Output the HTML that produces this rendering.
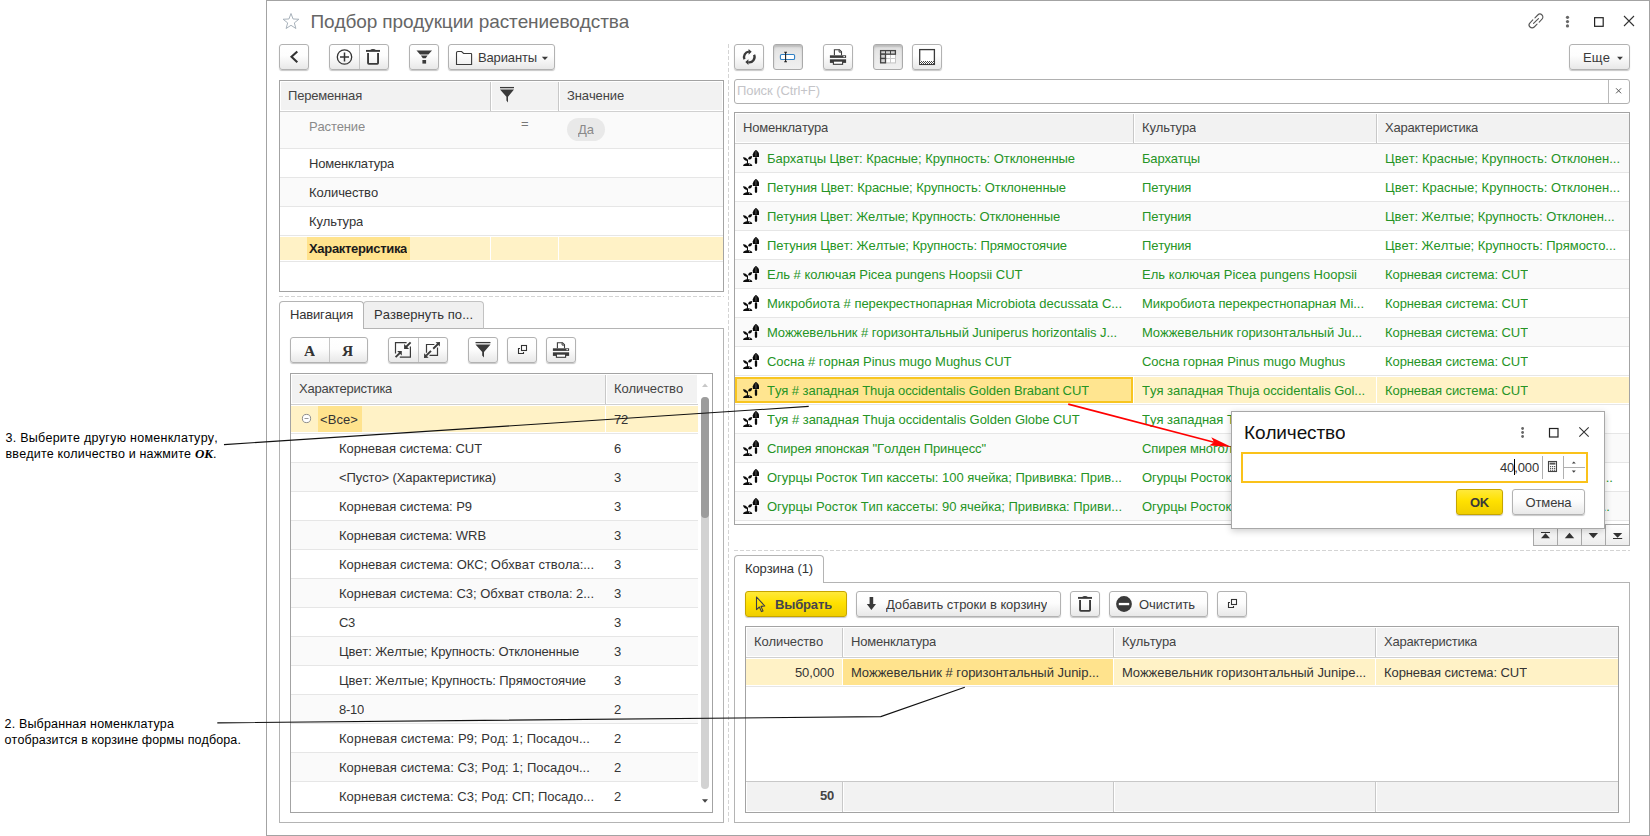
<!DOCTYPE html>
<html lang="ru"><head><meta charset="utf-8"><title>Подбор продукции растениеводства</title>
<style>
*{box-sizing:border-box;margin:0;padding:0}
html,body{width:1650px;height:836px;overflow:hidden;background:#fff}
body{position:relative;font-kerning:none;font-family:"Liberation Sans",sans-serif;font-size:13px;color:#333}
.abs,.btn,.t,.hl,.vl,.box,.hdr,.fill{position:absolute}
.t{white-space:nowrap;line-height:16px;height:16px;overflow:hidden}
.win{position:absolute;left:266px;top:0;width:1384px;height:836px;border:1px solid #a3a3a3;background:#fff}
.btn{border:1px solid #b2b2b2;border-radius:3px;background:linear-gradient(#ffffff 0%,#fdfdfd 45%,#e8e8e8 100%);box-shadow:0 1px 1px rgba(0,0,0,.22)}
.btn.on{background:linear-gradient(#dedede 0%,#e8e8e8 40%,#f0f0f0 100%);box-shadow:inset 0 2px 2px rgba(0,0,0,.16);border-color:#aaa}
.btn.y{background:linear-gradient(#ffe93a 0%,#ffe100 45%,#f0ce00 100%);border-color:#c6a500}
.box{border:1px solid #a3a3a3;background:#fff}
.hdr{background:#f2f2f2}
.hl{height:1px;background:#e6e6e6}
.vl{width:1px;background:#d9d9d9}
.g{color:#259425}
.note{position:absolute;font-size:12px;line-height:16px;color:#000;white-space:nowrap}

</style></head><body>
<div class="win"></div>
<svg class="abs" style="left:281px;top:11px" width="20" height="20" viewBox="0 0 20 20"><polygon points="10.00,2.50 12.06,7.97 17.89,8.24 13.33,11.88 14.88,17.51 10.00,14.30 5.12,17.51 6.67,11.88 2.11,8.24 7.94,7.97" fill="none" stroke="#a7b1ba" stroke-width="1"/></svg><div class="t" style="left:310.5px;top:9px;font-size:19px;letter-spacing:-.12px;line-height:26px;height:26px;color:#666">Подбор продукции растениеводства</div><svg class="abs" style="left:1525px;top:10px" width="22" height="22" viewBox="0 0 22 22"><g fill="none" stroke="#555" stroke-width="1.1" stroke-linecap="round" transform="rotate(-45 11 11)"><path d="M9.5 8 H5.5 a3 3 0 0 0 0 6 H9.5"/><path d="M12.5 8 H16.5 a3 3 0 0 1 0 6 H12.5"/><path d="M7.5 11 H14.5"/></g></svg><svg class="abs" style="left:1564px;top:14px" width="8" height="16" viewBox="0 0 8 16"><g fill="#666"><circle cx="3.5" cy="3.3" r="1.6"/><circle cx="3.5" cy="7.6" r="1.6"/><circle cx="3.5" cy="11.9" r="1.6"/></g></svg><svg class="abs" style="left:1592px;top:15px" width="14" height="14" viewBox="0 0 14 14"><rect x="2.6" y="2.7" width="8.6" height="8.6" fill="none" stroke="#222" stroke-width="1.2"/></svg><svg class="abs" style="left:1622px;top:14px" width="14" height="14" viewBox="0 0 14 14"><path d="M2 2 L12 12 M12 2 L2 12" fill="none" stroke="#333" stroke-width="1.1"/></svg>
<div class="btn " style="left:279px;top:44px;width:30px;height:26px;"><svg class="abs" style="left:0px;top:0px" width="28" height="24" viewBox="0 0 28 24"><path d="M17.3 6.4 L11.5 11.85 L17.3 17.3" fill="none" stroke="#333" stroke-width="2.1" stroke-linejoin="miter"/></svg></div><div class="btn " style="left:329px;top:44px;width:60px;height:26px;"><div class="vl" style="left:29px;top:0;height:24px;background:#c4c4c4"></div><svg class="abs" style="left:0px;top:0px" width="58" height="24" viewBox="0 0 58 24"><circle cx="14.5" cy="12" r="7.2" fill="none" stroke="#333" stroke-width="1.3"/><path d="M14.5 7.5 V16.5 M10 12 H19" stroke="#333" stroke-width="1.5" fill="none"/><g transform="translate(29,0)"><path d="M7 5.9 H21" stroke="#3a3a3a" stroke-width="1.9"/><path d="M10.8 5.2 Q14 3 17.2 5.2 Z" fill="#3a3a3a"/><path d="M9.05 8.1 V18.1 Q9.05 18.85 9.8 18.85 H18.3 Q19.05 18.85 19.05 18.1 V8.1" fill="none" stroke="#3a3a3a" stroke-width="1.9"/></g></svg></div><div class="btn " style="left:409px;top:44px;width:30px;height:26px;"><svg class="abs" style="left:0px;top:0px" width="28" height="24" viewBox="0 0 28 24"><path d="M6.5 5.5 h15.5 l-3.6 4 h-8.3 z" fill="#3a3a3a"/><path d="M10.9 10.6 h6.7 l-1.9 2.6 h-2.9 z" fill="#3a3a3a"/><rect x="12.4" y="15" width="3.7" height="3.6" fill="#3a3a3a"/></svg></div><div class="btn " style="left:448px;top:44px;width:107px;height:26px;"><svg class="abs" style="left:0px;top:0px" width="105" height="24" viewBox="0 0 105 24"><path d="M7.5 19.5 V7.8 Q7.5 6.5 8.8 6.5 H12.6 L14.6 8.5 H22 Q22.6 8.5 22.6 9.2 V19.5 Z" fill="none" stroke="#3a3a3a" stroke-width="1.1"/><path d="M92.8 11.8 h6.2 l-3.1 3.2 z" fill="#3a3a3a"/></svg><div class="t " style="left:29px;top:5px;color:#3a3a3a;letter-spacing:-0.138px">Варианты</div></div><div class="box" style="left:279px;top:80px;width:445px;height:212px"></div><div class="hdr" style="left:281px;top:82px;width:441px;height:28px"></div><div class="hl" style="left:280px;top:111px;width:443px;background:#d0d0d0"></div><div class="vl" style="left:490px;top:82px;height:29px;background:#c8c8c8"></div><div class="vl" style="left:491px;top:82px;height:29px;background:#fff"></div><div class="vl" style="left:558px;top:82px;height:29px;background:#c8c8c8"></div><div class="vl" style="left:559px;top:82px;height:29px;background:#fff"></div><div class="t " style="left:288px;top:88px;color:#444;;letter-spacing:-0.183px">Переменная</div><div class="t " style="left:567px;top:88px;color:#444;;letter-spacing:-0.117px">Значение</div><svg class="abs" style="left:498px;top:85px" width="18" height="20" viewBox="0 0 18 20"><path d="M2 2.6 H16" stroke="#3a3a3a" stroke-width="1.3"/><path d="M2 4.6 H16 L10 11.8 V17.4 L8.4 15.6 V11.8 Z" fill="#3a3a3a"/></svg><div class="fill" style="left:280px;top:112px;width:443px;height:36px;background:#fafafa"></div><div class="fill" style="left:280px;top:178px;width:443px;height:28px;background:#fafafa"></div><div class="hl" style="left:280px;top:148px;width:443px"></div><div class="hl" style="left:280px;top:177px;width:443px"></div><div class="hl" style="left:280px;top:206px;width:443px"></div><div class="hl" style="left:280px;top:235px;width:443px"></div><div class="hl" style="left:280px;top:261px;width:443px"></div><div class="fill" style="left:280px;top:237px;width:443px;height:23px;background:#fff2c6"></div><div class="fill" style="left:307px;top:237px;width:103px;height:23px;background:#ffe38d"></div><div class="vl" style="left:490px;top:237px;height:23px;background:#fff"></div><div class="vl" style="left:558px;top:237px;height:23px;background:#fff"></div><div class="t " style="left:309px;top:119px;color:#8a8a8a;letter-spacing:-0.157px">Растение</div><div class="t " style="left:521px;top:116px;color:#777;letter-spacing:0.408px">=</div><div class="fill" style="left:567px;top:118px;width:38px;height:23px;border-radius:11.5px;background:#e9e9e9"></div><div class="t " style="left:578px;top:122px;color:#8a8a8a;letter-spacing:-0.017px">Да</div><div class="t " style="left:309px;top:156px;color:#343434;letter-spacing:-0.199px">Номенклатура</div><div class="t " style="left:309px;top:185px;color:#343434;letter-spacing:-0.124px">Количество</div><div class="t " style="left:309px;top:214px;color:#343434;letter-spacing:-0.168px">Культура</div><div class="t " style="left:309px;top:241px;color:#1a1a1a;font-weight:bold;letter-spacing:-0.317px">Характеристика</div><div class="abs" style="left:279px;top:296px;width:445px;height:1px;background:repeating-linear-gradient(90deg,#d4d4d4 0 4px,transparent 4px 6px)"></div><div class="abs" style="left:728px;top:44px;width:1px;height:778px;background:repeating-linear-gradient(180deg,#d4d4d4 0 4px,transparent 4px 6px)"></div><div class="abs" style="left:279px;top:328px;width:445px;height:495px;border:1px solid #b4b4b4;background:#fff"></div><div class="abs" style="left:363px;top:301px;width:121px;height:28px;border:1px solid #c2c2c2;border-radius:4px 4px 0 0;background:#f0f0f0;border-bottom-color:#b4b4b4"></div><div class="abs" style="left:279px;top:301px;width:85px;height:28px;border:1px solid #b4b4b4;border-bottom:none;border-radius:4px 4px 0 0;background:#fff"></div><div class="t " style="left:290px;top:307px;color:#333;letter-spacing:-0.167px">Навигация</div><div class="t " style="left:374px;top:307px;color:#333;letter-spacing:0.049px">Развернуть по...</div><div class="btn " style="left:290px;top:337px;width:78px;height:26px;"><div class="vl" style="left:38px;top:0;height:24px;background:#c4c4c4"></div><div class="t" style="left:13px;top:4.5px;font-family:'Liberation Serif',serif;font-weight:bold;font-size:15.5px;color:#333">А</div><div class="t" style="left:51px;top:4.5px;font-family:'Liberation Serif',serif;font-weight:bold;font-size:15.5px;color:#333">Я</div></div><div class="btn " style="left:388px;top:337px;width:60px;height:26px;"><div class="vl" style="left:29px;top:0;height:24px;background:#c4c4c4"></div><svg class="abs" style="left:0px;top:0px" width="58" height="24" viewBox="0 0 58 24"><g fill="none" stroke="#3a3a3a" stroke-width="1.2"><path d="M17.6 4.6 H6.5 V15.5"/><path d="M21.4 8.5 V19.2 H10.8"/><path d="M21.6 4.4 L17 9" stroke-width="1.9"/><path d="M6.6 19.2 L11 14.8" stroke-width="1.9"/></g><path d="M15.1 5.9 V10.9 H20.1 Z M12.8 17.6 V12.9 H8.1 Z" fill="#3a3a3a"/><g fill="none" stroke="#3a3a3a" stroke-width="1.2"><path d="M45.4 6.5 H37.5 V14.7"/><path d="M48.5 9.6 V17.3 H40.5"/><path d="M49 6 L44.2 10.7 M42 12.8 L37.2 17.6" stroke-width="1.9"/></g><path d="M51 4 L46.6 4.2 L50.8 8.5 Z M35 19.9 L35.2 15.2 L39.6 19.7 Z" fill="#3a3a3a"/></svg></div><div class="btn " style="left:468px;top:337px;width:30px;height:26px;"><svg class="abs" style="left:0px;top:0px" width="28" height="24" viewBox="0 0 28 24"><path d="M6.5 4.6 H21.5" stroke="#3a3a3a" stroke-width="1.3"/><path d="M6.5 6.6 H21.5 L15 14 V19.6 L13.2 17.6 V14 Z" fill="#3a3a3a"/></svg></div><div class="btn " style="left:507px;top:337px;width:30px;height:26px;"><svg class="abs" style="left:0px;top:0px" width="28" height="24" viewBox="0 0 28 24"><g fill="none" stroke="#333" stroke-width="1.1"><rect x="13.5" y="7.5" width="5" height="5"/><path d="M12 10.5 H10.5 V15.5 H15.5 V14"/></g></svg></div><div class="btn " style="left:546px;top:337px;width:30px;height:26px;"><svg class="abs" style="left:0px;top:0px" width="28" height="24" viewBox="0 0 28 24"><g transform="translate(5.9,4)"><path d="M4.5 6.2 V0.7 H9.6 L11.6 2.7 V6.2" fill="#fff" stroke="#3a3a3a" stroke-width="1.1"/><path d="M9.2 0.7 V3.1 H11.6" fill="none" stroke="#3a3a3a" stroke-width="1"/><rect x="0" y="6.3" width="16.2" height="2.6" fill="#3a3a3a"/><rect x="13.6" y="7" width="1.3" height="1.2" fill="#fff"/><rect x="0" y="10.3" width="16.2" height="3.6" fill="#3a3a3a"/><rect x="3.5" y="12.1" width="9.2" height="3.2" fill="#fff" stroke="#3a3a3a" stroke-width="1.1"/></g></svg></div><div class="box" style="left:290px;top:373px;width:423px;height:440px"></div><div class="hdr" style="left:292px;top:375px;width:405px;height:28px"></div><div class="hl" style="left:291px;top:404px;width:407px;background:#d0d0d0"></div><div class="vl" style="left:605px;top:375px;height:29px;background:#c8c8c8"></div><div class="vl" style="left:606px;top:375px;height:29px;background:#fff"></div><div class="t " style="left:299px;top:381px;color:#444;;letter-spacing:-0.240px">Характеристика</div><div class="t " style="left:614px;top:381px;color:#444;;letter-spacing:-0.124px">Количество</div><div class="fill" style="left:291px;top:406px;width:407px;height:26px;background:#fff2c6"></div><div class="fill" style="left:318px;top:406px;width:44px;height:26px;background:#ffe38d"></div><div class="vl" style="left:605px;top:406px;height:26px;background:#fff"></div><svg class="abs" style="left:301px;top:413px" width="11" height="11" viewBox="0 0 11 11"><circle cx="5.5" cy="5.5" r="4.1" fill="#fff" stroke="#8c8c8c" stroke-width="1"/><path d="M3.5 5.5 H7.5" stroke="#9a9a9a" stroke-width="1"/></svg><div class="t " style="left:320px;top:412px;color:#343434;letter-spacing:0.083px">&lt;Все&gt;</div><div class="t " style="left:614px;top:412px;color:#343434;letter-spacing:-0.230px">72</div><div class="hl" style="left:291px;top:433px;width:407px"></div><div class="t " style="left:339px;top:441px;color:#343434;letter-spacing:-0.085px">Корневая система: CUT</div><div class="t " style="left:614px;top:441px;color:#343434;letter-spacing:-0.230px">6</div><div class="fill" style="left:291px;top:463px;width:407px;height:28px;background:#fafafa"></div><div class="hl" style="left:291px;top:462px;width:407px"></div><div class="t " style="left:339px;top:470px;color:#343434;letter-spacing:-0.097px">&lt;Пусто&gt; (Характеристика)</div><div class="t " style="left:614px;top:470px;color:#343434;letter-spacing:-0.230px">3</div><div class="hl" style="left:291px;top:491px;width:407px"></div><div class="t " style="left:339px;top:499px;color:#343434;letter-spacing:-0.048px">Корневая система: P9</div><div class="t " style="left:614px;top:499px;color:#343434;letter-spacing:-0.230px">3</div><div class="fill" style="left:291px;top:521px;width:407px;height:28px;background:#fafafa"></div><div class="hl" style="left:291px;top:520px;width:407px"></div><div class="t " style="left:339px;top:528px;color:#343434;letter-spacing:-0.067px">Корневая система: WRB</div><div class="t " style="left:614px;top:528px;color:#343434;letter-spacing:-0.230px">3</div><div class="hl" style="left:291px;top:549px;width:407px"></div><div class="t " style="left:339px;top:557px;color:#343434;letter-spacing:-0.024px">Корневая система: ОКС; Обхват ствола:...</div><div class="t " style="left:614px;top:557px;color:#343434;letter-spacing:-0.230px">3</div><div class="fill" style="left:291px;top:579px;width:407px;height:28px;background:#fafafa"></div><div class="hl" style="left:291px;top:578px;width:407px"></div><div class="t " style="left:339px;top:586px;color:#343434;letter-spacing:-0.033px">Корневая система: C3; Обхват ствола: 2...</div><div class="t " style="left:614px;top:586px;color:#343434;letter-spacing:-0.230px">3</div><div class="hl" style="left:291px;top:607px;width:407px"></div><div class="t " style="left:339px;top:615px;color:#343434;letter-spacing:-0.309px">C3</div><div class="t " style="left:614px;top:615px;color:#343434;letter-spacing:-0.230px">3</div><div class="fill" style="left:291px;top:637px;width:407px;height:28px;background:#fafafa"></div><div class="hl" style="left:291px;top:636px;width:407px"></div><div class="t " style="left:339px;top:644px;color:#343434;letter-spacing:-0.128px">Цвет: Желтые; Крупность: Отклоненные</div><div class="t " style="left:614px;top:644px;color:#343434;letter-spacing:-0.230px">3</div><div class="hl" style="left:291px;top:665px;width:407px"></div><div class="t " style="left:339px;top:673px;color:#343434;letter-spacing:-0.094px">Цвет: Желтые; Крупность: Прямостоячие</div><div class="t " style="left:614px;top:673px;color:#343434;letter-spacing:-0.230px">3</div><div class="fill" style="left:291px;top:695px;width:407px;height:28px;background:#fafafa"></div><div class="hl" style="left:291px;top:694px;width:407px"></div><div class="t " style="left:339px;top:702px;color:#343434;letter-spacing:-0.288px">8-10</div><div class="t " style="left:614px;top:702px;color:#343434;letter-spacing:-0.230px">2</div><div class="hl" style="left:291px;top:723px;width:407px"></div><div class="t " style="left:339px;top:731px;color:#343434;letter-spacing:0.045px">Корневая система: P9; Род: 1; Посадоч...</div><div class="t " style="left:614px;top:731px;color:#343434;letter-spacing:-0.230px">2</div><div class="fill" style="left:291px;top:753px;width:407px;height:28px;background:#fafafa"></div><div class="hl" style="left:291px;top:752px;width:407px"></div><div class="t " style="left:339px;top:760px;color:#343434;letter-spacing:0.027px">Корневая система: C3; Род: 1; Посадоч...</div><div class="t " style="left:614px;top:760px;color:#343434;letter-spacing:-0.230px">2</div><div class="hl" style="left:291px;top:781px;width:407px"></div><div class="t " style="left:339px;top:789px;color:#343434;letter-spacing:0.012px">Корневая система: C3; Род: СП; Посадо...</div><div class="t " style="left:614px;top:789px;color:#343434;letter-spacing:-0.230px">2</div><svg class="abs" style="left:699px;top:383px" width="12" height="8" viewBox="0 0 12 8"><path d="M3 4 L6 0.5 L9 4 Z" fill="#c8c8c8"/></svg><div class="fill" style="left:701px;top:397px;width:8px;height:392px;border-radius:4px;background:#d2d2d2"></div><div class="fill" style="left:701px;top:397px;width:8px;height:121px;border-radius:4px;background:#9c9c9c"></div><svg class="abs" style="left:699px;top:796px" width="12" height="8" viewBox="0 0 12 8"><path d="M3 3.2 L6 6.8 L9 3.2 Z" fill="#444"/></svg>
<div class="btn " style="left:734px;top:44px;width:30px;height:26px;"><svg class="abs" style="left:0px;top:0px" width="28" height="24" viewBox="0 0 28 24"><g transform="translate(.4,0)"><g fill="none" stroke="#3a3a3a" stroke-width="2.3"><path d="M9.1 14.24 A5.3 5.3 0 0 1 13.5 6.72"/><path d="M18.7 9.76 A5.3 5.3 0 0 1 12.9 17.2"/></g><path d="M13.2 3.9 L16.3 6.8 L13.2 9.7 Z M13 14.2 L9.9 17.1 L13 20 Z" fill="#3a3a3a"/></g></svg></div><div class="btn on" style="left:773px;top:44px;width:30px;height:26px;"><svg class="abs" style="left:0px;top:0px" width="28" height="24" viewBox="0 0 28 24"><rect x="6.4" y="9.5" width="14.2" height="5" rx="1.3" fill="#fff" stroke="#2f7fc4" stroke-width="1.1"/><path d="M11.6 7.2 V16.8 M10.2 7.3 H13 M10.2 16.7 H13" stroke="#222" stroke-width="1.1" fill="none"/></svg></div><div class="btn " style="left:823px;top:44px;width:30px;height:26px;"><svg class="abs" style="left:0px;top:0px" width="28" height="24" viewBox="0 0 28 24"><g transform="translate(5.9,4)"><path d="M4.5 6.2 V0.7 H9.6 L11.6 2.7 V6.2" fill="#fff" stroke="#3a3a3a" stroke-width="1.1"/><path d="M9.2 0.7 V3.1 H11.6" fill="none" stroke="#3a3a3a" stroke-width="1"/><rect x="0" y="6.3" width="16.2" height="2.6" fill="#3a3a3a"/><rect x="13.6" y="7" width="1.3" height="1.2" fill="#fff"/><rect x="0" y="10.3" width="16.2" height="3.6" fill="#3a3a3a"/><rect x="3.5" y="12.1" width="9.2" height="3.2" fill="#fff" stroke="#3a3a3a" stroke-width="1.1"/></g></svg></div><div class="btn on" style="left:873px;top:44px;width:30px;height:26px;"><svg class="abs" style="left:0px;top:0px" width="28" height="24" viewBox="0 0 28 24"><rect x="6.5" y="5.5" width="15" height="12.4" fill="#fff" stroke="#c4c4c4" stroke-width="1"/><path d="M16.5 9 V18 M11.5 13.5 H21.5" stroke="#c8c8c8" stroke-width="1" fill="none"/><rect x="6.6" y="5.6" width="14.8" height="3.6" fill="#d4d4d4" stroke="#444" stroke-width="1.3"/><path d="M11.5 5.5 V9 M16.5 5.5 V9" stroke="#444" stroke-width="1"/><rect x="6.6" y="9.2" width="4.9" height="4.3" fill="#d4d4d4" stroke="#444" stroke-width="1.3"/><rect x="6.6" y="13.5" width="4.9" height="4.3" fill="#d4d4d4" stroke="#444" stroke-width="1.3"/></svg></div><div class="btn " style="left:912px;top:44px;width:30px;height:26px;"><svg class="abs" style="left:0px;top:0px" width="28" height="24" viewBox="0 0 28 24"><defs><pattern id="chk" width="2" height="2" patternUnits="userSpaceOnUse"><rect width="2" height="2" fill="#fff"/><rect width="1" height="1" fill="#444"/><rect x="1" y="1" width="1" height="1" fill="#444"/></pattern></defs><rect x="6.7" y="4.6" width="14.7" height="14.8" fill="#fff" stroke="#3a3a3a" stroke-width="1.3"/><rect x="7" y="16" width="14" height="3" fill="url(#chk)"/></svg></div><div class="btn " style="left:1569px;top:44px;width:61px;height:26px;"><div class="t " style="left:13px;top:5px;color:#3a3a3a;letter-spacing:0.134px">Еще</div><svg class="abs" style="left:0px;top:0px" width="59" height="24" viewBox="0 0 59 24"><path d="M47.1 11.8 h5.8 l-2.9 3.2 z" fill="#3a3a3a"/></svg></div><div class="abs" style="left:734px;top:79px;width:896px;height:25px;border:1px solid #b0b0b0;border-radius:3px;background:#fff"></div><div class="vl" style="left:1608px;top:80px;height:23px;background:#b9b9b9"></div><div class="t " style="left:737px;top:83px;color:#c4c4c8;letter-spacing:-0.075px">Поиск (Ctrl+F)</div><svg class="abs" style="left:1613px;top:86px" width="12" height="12" viewBox="0 0 12 12"><path d="M3.1 2.3 L8.1 7.3 M8.1 2.3 L3.1 7.3" stroke="#555" stroke-width="1" fill="none"/></svg><div class="box" style="left:734px;top:112px;width:896px;height:413px"></div><div class="hdr" style="left:736px;top:114px;width:893px;height:28px"></div><div class="hl" style="left:735px;top:143px;width:894px;background:#d0d0d0"></div><div class="vl" style="left:1133px;top:114px;height:29px;background:#c8c8c8"></div><div class="vl" style="left:1134px;top:114px;height:29px;background:#fff"></div><div class="vl" style="left:1376px;top:114px;height:29px;background:#c8c8c8"></div><div class="vl" style="left:1377px;top:114px;height:29px;background:#fff"></div><div class="t " style="left:743px;top:120px;color:#444;;letter-spacing:-0.199px">Номенклатура</div><div class="t " style="left:1142px;top:120px;color:#444;;letter-spacing:-0.168px">Культура</div><div class="t " style="left:1385px;top:120px;color:#444;;letter-spacing:-0.240px">Характеристика</div><div class="fill" style="left:735px;top:144px;width:894px;height:28px;background:#fafafa"></div><div class="hl" style="left:735px;top:172px;width:894px"></div><svg class="abs" style="left:743px;top:150px" width="16" height="16" viewBox="0 0 16 16"><g fill="#0a0a0a"><path d="M12.95 -0.2 Q16.2 2.2 16.2 4.3 V6.9 H9.8 V4.3 Q9.8 2.2 12.95 -0.2 Z"/><rect x="11.85" y="7.3" width="2.3" height="6.6" rx="1.1"/><path d="M0 7.3 Q2.7 6.9 3.9 8.8 Q4.4 10.3 3.7 10.7 Q0.9 10.9 0 7.3 Z"/><path d="M9 5.9 Q9.2 9.1 6.3 9.6 Q4.9 9.5 5.2 8 Q6.2 6 9 5.9 Z"/><path d="M3.2 10.2 L5 9 V13.6 H3.9 V10.9 Z"/><path d="M0 16.1 Q0.2 14.3 2 13.8 L4.5 12.9 L7.5 13.8 Q9.2 14.4 9.4 16.1 Z"/></g><path d="M12.95 1.2 V6.4" stroke="#8a8a8a" stroke-width="0.6" fill="none"/><rect x="6" y="14.4" width="1.2" height=".7" fill="#ddd"/></svg><div class="t g" style="left:767px;top:151px;;letter-spacing:-0.057px">Бархатцы Цвет: Красные; Крупность: Отклоненные</div><div class="t g" style="left:1142px;top:151px;;letter-spacing:-0.183px">Бархатцы</div><div class="t g" style="left:1385px;top:151px;;letter-spacing:0.010px">Цвет: Красные; Крупность: Отклонен...</div><div class="hl" style="left:735px;top:201px;width:894px"></div><svg class="abs" style="left:743px;top:179px" width="16" height="16" viewBox="0 0 16 16"><g fill="#0a0a0a"><path d="M12.95 -0.2 Q16.2 2.2 16.2 4.3 V6.9 H9.8 V4.3 Q9.8 2.2 12.95 -0.2 Z"/><rect x="11.85" y="7.3" width="2.3" height="6.6" rx="1.1"/><path d="M0 7.3 Q2.7 6.9 3.9 8.8 Q4.4 10.3 3.7 10.7 Q0.9 10.9 0 7.3 Z"/><path d="M9 5.9 Q9.2 9.1 6.3 9.6 Q4.9 9.5 5.2 8 Q6.2 6 9 5.9 Z"/><path d="M3.2 10.2 L5 9 V13.6 H3.9 V10.9 Z"/><path d="M0 16.1 Q0.2 14.3 2 13.8 L4.5 12.9 L7.5 13.8 Q9.2 14.4 9.4 16.1 Z"/></g><path d="M12.95 1.2 V6.4" stroke="#8a8a8a" stroke-width="0.6" fill="none"/><rect x="6" y="14.4" width="1.2" height=".7" fill="#ddd"/></svg><div class="t g" style="left:767px;top:180px;;letter-spacing:-0.059px">Петуния Цвет: Красные; Крупность: Отклоненные</div><div class="t g" style="left:1142px;top:180px;;letter-spacing:-0.216px">Петуния</div><div class="t g" style="left:1385px;top:180px;;letter-spacing:0.010px">Цвет: Красные; Крупность: Отклонен...</div><div class="fill" style="left:735px;top:202px;width:894px;height:28px;background:#fafafa"></div><div class="hl" style="left:735px;top:230px;width:894px"></div><svg class="abs" style="left:743px;top:208px" width="16" height="16" viewBox="0 0 16 16"><g fill="#0a0a0a"><path d="M12.95 -0.2 Q16.2 2.2 16.2 4.3 V6.9 H9.8 V4.3 Q9.8 2.2 12.95 -0.2 Z"/><rect x="11.85" y="7.3" width="2.3" height="6.6" rx="1.1"/><path d="M0 7.3 Q2.7 6.9 3.9 8.8 Q4.4 10.3 3.7 10.7 Q0.9 10.9 0 7.3 Z"/><path d="M9 5.9 Q9.2 9.1 6.3 9.6 Q4.9 9.5 5.2 8 Q6.2 6 9 5.9 Z"/><path d="M3.2 10.2 L5 9 V13.6 H3.9 V10.9 Z"/><path d="M0 16.1 Q0.2 14.3 2 13.8 L4.5 12.9 L7.5 13.8 Q9.2 14.4 9.4 16.1 Z"/></g><path d="M12.95 1.2 V6.4" stroke="#8a8a8a" stroke-width="0.6" fill="none"/><rect x="6" y="14.4" width="1.2" height=".7" fill="#ddd"/></svg><div class="t g" style="left:767px;top:209px;;letter-spacing:-0.130px">Петуния Цвет: Желтые; Крупность: Отклоненные</div><div class="t g" style="left:1142px;top:209px;;letter-spacing:-0.216px">Петуния</div><div class="t g" style="left:1385px;top:209px;;letter-spacing:-0.061px">Цвет: Желтые; Крупность: Отклонен...</div><div class="hl" style="left:735px;top:259px;width:894px"></div><svg class="abs" style="left:743px;top:237px" width="16" height="16" viewBox="0 0 16 16"><g fill="#0a0a0a"><path d="M12.95 -0.2 Q16.2 2.2 16.2 4.3 V6.9 H9.8 V4.3 Q9.8 2.2 12.95 -0.2 Z"/><rect x="11.85" y="7.3" width="2.3" height="6.6" rx="1.1"/><path d="M0 7.3 Q2.7 6.9 3.9 8.8 Q4.4 10.3 3.7 10.7 Q0.9 10.9 0 7.3 Z"/><path d="M9 5.9 Q9.2 9.1 6.3 9.6 Q4.9 9.5 5.2 8 Q6.2 6 9 5.9 Z"/><path d="M3.2 10.2 L5 9 V13.6 H3.9 V10.9 Z"/><path d="M0 16.1 Q0.2 14.3 2 13.8 L4.5 12.9 L7.5 13.8 Q9.2 14.4 9.4 16.1 Z"/></g><path d="M12.95 1.2 V6.4" stroke="#8a8a8a" stroke-width="0.6" fill="none"/><rect x="6" y="14.4" width="1.2" height=".7" fill="#ddd"/></svg><div class="t g" style="left:767px;top:238px;;letter-spacing:-0.102px">Петуния Цвет: Желтые; Крупность: Прямостоячие</div><div class="t g" style="left:1142px;top:238px;;letter-spacing:-0.216px">Петуния</div><div class="t g" style="left:1385px;top:238px;;letter-spacing:-0.056px">Цвет: Желтые; Крупность: Прямосто...</div><div class="fill" style="left:735px;top:260px;width:894px;height:28px;background:#fafafa"></div><div class="hl" style="left:735px;top:288px;width:894px"></div><svg class="abs" style="left:743px;top:266px" width="16" height="16" viewBox="0 0 16 16"><g fill="#0a0a0a"><path d="M12.95 -0.2 Q16.2 2.2 16.2 4.3 V6.9 H9.8 V4.3 Q9.8 2.2 12.95 -0.2 Z"/><rect x="11.85" y="7.3" width="2.3" height="6.6" rx="1.1"/><path d="M0 7.3 Q2.7 6.9 3.9 8.8 Q4.4 10.3 3.7 10.7 Q0.9 10.9 0 7.3 Z"/><path d="M9 5.9 Q9.2 9.1 6.3 9.6 Q4.9 9.5 5.2 8 Q6.2 6 9 5.9 Z"/><path d="M3.2 10.2 L5 9 V13.6 H3.9 V10.9 Z"/><path d="M0 16.1 Q0.2 14.3 2 13.8 L4.5 12.9 L7.5 13.8 Q9.2 14.4 9.4 16.1 Z"/></g><path d="M12.95 1.2 V6.4" stroke="#8a8a8a" stroke-width="0.6" fill="none"/><rect x="6" y="14.4" width="1.2" height=".7" fill="#ddd"/></svg><div class="t g" style="left:767px;top:267px;;letter-spacing:-0.005px">Ель # колючая Picea pungens Hoopsii CUT</div><div class="t g" style="left:1142px;top:267px;;letter-spacing:0.014px">Ель колючая Picea pungens Hoopsii</div><div class="t g" style="left:1385px;top:267px;;letter-spacing:-0.085px">Корневая система: CUT</div><div class="hl" style="left:735px;top:317px;width:894px"></div><svg class="abs" style="left:743px;top:295px" width="16" height="16" viewBox="0 0 16 16"><g fill="#0a0a0a"><path d="M12.95 -0.2 Q16.2 2.2 16.2 4.3 V6.9 H9.8 V4.3 Q9.8 2.2 12.95 -0.2 Z"/><rect x="11.85" y="7.3" width="2.3" height="6.6" rx="1.1"/><path d="M0 7.3 Q2.7 6.9 3.9 8.8 Q4.4 10.3 3.7 10.7 Q0.9 10.9 0 7.3 Z"/><path d="M9 5.9 Q9.2 9.1 6.3 9.6 Q4.9 9.5 5.2 8 Q6.2 6 9 5.9 Z"/><path d="M3.2 10.2 L5 9 V13.6 H3.9 V10.9 Z"/><path d="M0 16.1 Q0.2 14.3 2 13.8 L4.5 12.9 L7.5 13.8 Q9.2 14.4 9.4 16.1 Z"/></g><path d="M12.95 1.2 V6.4" stroke="#8a8a8a" stroke-width="0.6" fill="none"/><rect x="6" y="14.4" width="1.2" height=".7" fill="#ddd"/></svg><div class="t g" style="left:767px;top:296px;;letter-spacing:-0.032px">Микробиота # перекрестнопарная Microbiota decussata C...</div><div class="t g" style="left:1142px;top:296px;;letter-spacing:-0.054px">Микробиота перекрестнопарная Mi...</div><div class="t g" style="left:1385px;top:296px;;letter-spacing:-0.085px">Корневая система: CUT</div><div class="fill" style="left:735px;top:318px;width:894px;height:28px;background:#fafafa"></div><div class="hl" style="left:735px;top:346px;width:894px"></div><svg class="abs" style="left:743px;top:324px" width="16" height="16" viewBox="0 0 16 16"><g fill="#0a0a0a"><path d="M12.95 -0.2 Q16.2 2.2 16.2 4.3 V6.9 H9.8 V4.3 Q9.8 2.2 12.95 -0.2 Z"/><rect x="11.85" y="7.3" width="2.3" height="6.6" rx="1.1"/><path d="M0 7.3 Q2.7 6.9 3.9 8.8 Q4.4 10.3 3.7 10.7 Q0.9 10.9 0 7.3 Z"/><path d="M9 5.9 Q9.2 9.1 6.3 9.6 Q4.9 9.5 5.2 8 Q6.2 6 9 5.9 Z"/><path d="M3.2 10.2 L5 9 V13.6 H3.9 V10.9 Z"/><path d="M0 16.1 Q0.2 14.3 2 13.8 L4.5 12.9 L7.5 13.8 Q9.2 14.4 9.4 16.1 Z"/></g><path d="M12.95 1.2 V6.4" stroke="#8a8a8a" stroke-width="0.6" fill="none"/><rect x="6" y="14.4" width="1.2" height=".7" fill="#ddd"/></svg><div class="t g" style="left:767px;top:325px;;letter-spacing:-0.072px">Можжевельник # горизонтальный Juniperus horizontalis J...</div><div class="t g" style="left:1142px;top:325px;;letter-spacing:-0.034px">Можжевельник горизонтальный Ju...</div><div class="t g" style="left:1385px;top:325px;;letter-spacing:-0.085px">Корневая система: CUT</div><div class="hl" style="left:735px;top:375px;width:894px"></div><svg class="abs" style="left:743px;top:353px" width="16" height="16" viewBox="0 0 16 16"><g fill="#0a0a0a"><path d="M12.95 -0.2 Q16.2 2.2 16.2 4.3 V6.9 H9.8 V4.3 Q9.8 2.2 12.95 -0.2 Z"/><rect x="11.85" y="7.3" width="2.3" height="6.6" rx="1.1"/><path d="M0 7.3 Q2.7 6.9 3.9 8.8 Q4.4 10.3 3.7 10.7 Q0.9 10.9 0 7.3 Z"/><path d="M9 5.9 Q9.2 9.1 6.3 9.6 Q4.9 9.5 5.2 8 Q6.2 6 9 5.9 Z"/><path d="M3.2 10.2 L5 9 V13.6 H3.9 V10.9 Z"/><path d="M0 16.1 Q0.2 14.3 2 13.8 L4.5 12.9 L7.5 13.8 Q9.2 14.4 9.4 16.1 Z"/></g><path d="M12.95 1.2 V6.4" stroke="#8a8a8a" stroke-width="0.6" fill="none"/><rect x="6" y="14.4" width="1.2" height=".7" fill="#ddd"/></svg><div class="t g" style="left:767px;top:354px;;letter-spacing:-0.016px">Сосна # горная Pinus mugo Mughus CUT</div><div class="t g" style="left:1142px;top:354px;;letter-spacing:-0.020px">Сосна горная Pinus mugo Mughus</div><div class="t g" style="left:1385px;top:354px;;letter-spacing:-0.085px">Корневая система: CUT</div><div class="fill" style="left:735px;top:377px;width:894px;height:26px;background:#fff2c6"></div><div class="fill" style="left:735px;top:377px;width:398px;height:26px;background:#ffe590;border:2px solid #f8c520"></div><div class="vl" style="left:1133px;top:377px;height:26px;background:#fff"></div><div class="vl" style="left:1376px;top:377px;height:26px;background:#fff"></div><div class="hl" style="left:735px;top:404px;width:894px"></div><svg class="abs" style="left:743px;top:382px" width="16" height="16" viewBox="0 0 16 16"><g fill="#0a0a0a"><path d="M12.95 -0.2 Q16.2 2.2 16.2 4.3 V6.9 H9.8 V4.3 Q9.8 2.2 12.95 -0.2 Z"/><rect x="11.85" y="7.3" width="2.3" height="6.6" rx="1.1"/><path d="M0 7.3 Q2.7 6.9 3.9 8.8 Q4.4 10.3 3.7 10.7 Q0.9 10.9 0 7.3 Z"/><path d="M9 5.9 Q9.2 9.1 6.3 9.6 Q4.9 9.5 5.2 8 Q6.2 6 9 5.9 Z"/><path d="M3.2 10.2 L5 9 V13.6 H3.9 V10.9 Z"/><path d="M0 16.1 Q0.2 14.3 2 13.8 L4.5 12.9 L7.5 13.8 Q9.2 14.4 9.4 16.1 Z"/></g><path d="M12.95 1.2 V6.4" stroke="#8a8a8a" stroke-width="0.6" fill="none"/><rect x="6" y="14.4" width="1.2" height=".7" fill="#ddd"/></svg><div class="t g" style="left:767px;top:383px;;letter-spacing:-0.057px">Туя # западная Thuja occidentalis Golden Brabant CUT</div><div class="t g" style="left:1142px;top:383px;;letter-spacing:-0.021px">Туя западная Thuja occidentalis Gol...</div><div class="t g" style="left:1385px;top:383px;;letter-spacing:-0.085px">Корневая система: CUT</div><div class="hl" style="left:735px;top:433px;width:894px"></div><svg class="abs" style="left:743px;top:411px" width="16" height="16" viewBox="0 0 16 16"><g fill="#0a0a0a"><path d="M12.95 -0.2 Q16.2 2.2 16.2 4.3 V6.9 H9.8 V4.3 Q9.8 2.2 12.95 -0.2 Z"/><rect x="11.85" y="7.3" width="2.3" height="6.6" rx="1.1"/><path d="M0 7.3 Q2.7 6.9 3.9 8.8 Q4.4 10.3 3.7 10.7 Q0.9 10.9 0 7.3 Z"/><path d="M9 5.9 Q9.2 9.1 6.3 9.6 Q4.9 9.5 5.2 8 Q6.2 6 9 5.9 Z"/><path d="M3.2 10.2 L5 9 V13.6 H3.9 V10.9 Z"/><path d="M0 16.1 Q0.2 14.3 2 13.8 L4.5 12.9 L7.5 13.8 Q9.2 14.4 9.4 16.1 Z"/></g><path d="M12.95 1.2 V6.4" stroke="#8a8a8a" stroke-width="0.6" fill="none"/><rect x="6" y="14.4" width="1.2" height=".7" fill="#ddd"/></svg><div class="t g" style="left:767px;top:412px;;letter-spacing:-0.033px">Туя # западная Thuja occidentalis Golden Globe CUT</div><div class="t g" style="left:1142px;top:412px;;letter-spacing:-0.021px">Туя западная Thuja occidentalis Gol...</div><div class="t g" style="left:1385px;top:412px;;letter-spacing:-0.085px">Корневая система: CUT</div><div class="fill" style="left:735px;top:434px;width:894px;height:28px;background:#fafafa"></div><div class="hl" style="left:735px;top:462px;width:894px"></div><svg class="abs" style="left:743px;top:440px" width="16" height="16" viewBox="0 0 16 16"><g fill="#0a0a0a"><path d="M12.95 -0.2 Q16.2 2.2 16.2 4.3 V6.9 H9.8 V4.3 Q9.8 2.2 12.95 -0.2 Z"/><rect x="11.85" y="7.3" width="2.3" height="6.6" rx="1.1"/><path d="M0 7.3 Q2.7 6.9 3.9 8.8 Q4.4 10.3 3.7 10.7 Q0.9 10.9 0 7.3 Z"/><path d="M9 5.9 Q9.2 9.1 6.3 9.6 Q4.9 9.5 5.2 8 Q6.2 6 9 5.9 Z"/><path d="M3.2 10.2 L5 9 V13.6 H3.9 V10.9 Z"/><path d="M0 16.1 Q0.2 14.3 2 13.8 L4.5 12.9 L7.5 13.8 Q9.2 14.4 9.4 16.1 Z"/></g><path d="M12.95 1.2 V6.4" stroke="#8a8a8a" stroke-width="0.6" fill="none"/><rect x="6" y="14.4" width="1.2" height=".7" fill="#ddd"/></svg><div class="t g" style="left:767px;top:441px;;letter-spacing:-0.113px">Спирея японская "Голден Принцесс"</div><div class="t g" style="left:1142px;top:441px;;letter-spacing:-0.119px">Спирея многолетняя</div><div class="t g" style="left:1385px;top:441px;;letter-spacing:-0.084px">Корневая система: C2</div><div class="hl" style="left:735px;top:491px;width:894px"></div><svg class="abs" style="left:743px;top:469px" width="16" height="16" viewBox="0 0 16 16"><g fill="#0a0a0a"><path d="M12.95 -0.2 Q16.2 2.2 16.2 4.3 V6.9 H9.8 V4.3 Q9.8 2.2 12.95 -0.2 Z"/><rect x="11.85" y="7.3" width="2.3" height="6.6" rx="1.1"/><path d="M0 7.3 Q2.7 6.9 3.9 8.8 Q4.4 10.3 3.7 10.7 Q0.9 10.9 0 7.3 Z"/><path d="M9 5.9 Q9.2 9.1 6.3 9.6 Q4.9 9.5 5.2 8 Q6.2 6 9 5.9 Z"/><path d="M3.2 10.2 L5 9 V13.6 H3.9 V10.9 Z"/><path d="M0 16.1 Q0.2 14.3 2 13.8 L4.5 12.9 L7.5 13.8 Q9.2 14.4 9.4 16.1 Z"/></g><path d="M12.95 1.2 V6.4" stroke="#8a8a8a" stroke-width="0.6" fill="none"/><rect x="6" y="14.4" width="1.2" height=".7" fill="#ddd"/></svg><div class="t g" style="left:767px;top:470px;;letter-spacing:-0.016px">Огурцы Росток Тип кассеты: 100 ячейка; Прививка: Прив...</div><div class="t g" style="left:1142px;top:470px;;letter-spacing:-0.097px">Огурцы Росток</div><div class="t g" style="left:1385px;top:470px;;letter-spacing:0.009px">Тип кассеты: 100 ячейка; Прививка:...</div><div class="fill" style="left:735px;top:492px;width:894px;height:28px;background:#fafafa"></div><div class="hl" style="left:735px;top:520px;width:894px"></div><svg class="abs" style="left:743px;top:498px" width="16" height="16" viewBox="0 0 16 16"><g fill="#0a0a0a"><path d="M12.95 -0.2 Q16.2 2.2 16.2 4.3 V6.9 H9.8 V4.3 Q9.8 2.2 12.95 -0.2 Z"/><rect x="11.85" y="7.3" width="2.3" height="6.6" rx="1.1"/><path d="M0 7.3 Q2.7 6.9 3.9 8.8 Q4.4 10.3 3.7 10.7 Q0.9 10.9 0 7.3 Z"/><path d="M9 5.9 Q9.2 9.1 6.3 9.6 Q4.9 9.5 5.2 8 Q6.2 6 9 5.9 Z"/><path d="M3.2 10.2 L5 9 V13.6 H3.9 V10.9 Z"/><path d="M0 16.1 Q0.2 14.3 2 13.8 L4.5 12.9 L7.5 13.8 Q9.2 14.4 9.4 16.1 Z"/></g><path d="M12.95 1.2 V6.4" stroke="#8a8a8a" stroke-width="0.6" fill="none"/><rect x="6" y="14.4" width="1.2" height=".7" fill="#ddd"/></svg><div class="t g" style="left:767px;top:499px;;letter-spacing:-0.014px">Огурцы Росток Тип кассеты: 90 ячейка; Прививка: Приви...</div><div class="t g" style="left:1142px;top:499px;;letter-spacing:-0.097px">Огурцы Росток</div><div class="t g" style="left:1385px;top:499px;;letter-spacing:0.029px">Тип кассеты: 90 ячейка; Прививка: ...</div><div class="abs" style="left:1533px;top:524px;width:97px;height:22px;border:1px solid #a8a8a8;background:linear-gradient(#fff,#ececec)"></div><div class="vl" style="left:1557px;top:525px;height:20px;background:#a8a8a8"></div><div class="vl" style="left:1581px;top:525px;height:20px;background:#a8a8a8"></div><div class="vl" style="left:1605px;top:525px;height:20px;background:#a8a8a8"></div><svg class="abs" style="left:1533px;top:524px" width="97" height="22" viewBox="0 0 97 22"><g fill="#333"><path d="M8 7.9 h9 v1.1 h-9 z M8 14.2 l4.5 -5 l4.5 5 z"/><path d="M31.8 14.2 l4.7 -5.4 l4.7 5.4 z"/><path d="M55.6 9 l4.7 5.3 l4.7 -5.3 z"/><path d="M80 9 l4.6 4.8 l4.6 -4.8 z M80 13.9 h9.2 v1.1 h-9.2 z"/></g></svg><div class="abs" style="left:734px;top:550px;width:896px;height:1px;background:repeating-linear-gradient(90deg,#d4d4d4 0 4px,transparent 4px 6px)"></div>
<div class="abs" style="left:734px;top:582px;width:896px;height:241px;border:1px solid #b4b4b4;background:#fff"></div><div class="abs" style="left:734px;top:555px;width:90px;height:28px;border:1px solid #b4b4b4;border-bottom:none;border-radius:4px 4px 0 0;background:#fff"></div><div class="t " style="left:745px;top:561px;color:#333;letter-spacing:-0.106px">Корзина (1)</div><div class="btn y" style="left:745px;top:591px;width:102px;height:26px;"><svg class="abs" style="left:0px;top:0px" width="30" height="24" viewBox="0 0 30 24"><path d="M10.5 5 V17.6 L13.4 15 L15.4 19.6 L17 18.9 L15 14.4 L18.8 14 Z" fill="none" stroke="#3a3a4a" stroke-width="1.1" stroke-linejoin="round"/></svg><div class="t " style="left:29px;top:5px;color:#44444e;font-weight:bold;letter-spacing:-0.150px">Выбрать</div></div><div class="btn " style="left:856px;top:591px;width:205px;height:26px;"><svg class="abs" style="left:0px;top:0px" width="30" height="24" viewBox="0 0 30 24"><path d="M12.6 5.1 h3.6 v6.9 h2.8 l-4.6 6 l-4.6 -6 h2.8 z" fill="#3a3a3a"/></svg><div class="t " style="left:29px;top:5px;color:#3a3a3a;letter-spacing:-0.045px">Добавить строки в корзину</div></div><div class="btn " style="left:1070px;top:591px;width:30px;height:26px;"><svg class="abs" style="left:0px;top:0px" width="28" height="24" viewBox="0 0 28 24"><g transform="translate(0,0)"><path d="M7 5.9 H21" stroke="#3a3a3a" stroke-width="1.9"/><path d="M10.8 5.2 Q14 3 17.2 5.2 Z" fill="#3a3a3a"/><path d="M9.05 8.1 V18.1 Q9.05 18.85 9.8 18.85 H18.3 Q19.05 18.85 19.05 18.1 V8.1" fill="none" stroke="#3a3a3a" stroke-width="1.9"/></g></svg></div><div class="btn " style="left:1109px;top:591px;width:99px;height:26px;"><svg class="abs" style="left:0px;top:0px" width="30" height="24" viewBox="0 0 30 24"><circle cx="14" cy="12" r="7.9" fill="#3a3a3a"/><rect x="8.8" y="10.9" width="10.4" height="2.3" fill="#fff"/></svg><div class="t " style="left:29px;top:5px;color:#3a3a3a;letter-spacing:-0.074px">Очистить</div></div><div class="btn " style="left:1217px;top:591px;width:30px;height:26px;"><svg class="abs" style="left:0px;top:0px" width="28" height="24" viewBox="0 0 28 24"><g fill="none" stroke="#333" stroke-width="1.1"><rect x="13.5" y="7.5" width="5" height="5"/><path d="M12 10.5 H10.5 V15.5 H15.5 V14"/></g></svg></div><div class="box" style="left:745px;top:626px;width:874px;height:187px"></div><div class="hdr" style="left:747px;top:628px;width:871px;height:28px"></div><div class="hl" style="left:746px;top:657px;width:872px;background:#d0d0d0"></div><div class="vl" style="left:842px;top:628px;height:29px;background:#c8c8c8"></div><div class="vl" style="left:843px;top:628px;height:29px;background:#fff"></div><div class="vl" style="left:1113px;top:628px;height:29px;background:#c8c8c8"></div><div class="vl" style="left:1114px;top:628px;height:29px;background:#fff"></div><div class="vl" style="left:1375px;top:628px;height:29px;background:#c8c8c8"></div><div class="vl" style="left:1376px;top:628px;height:29px;background:#fff"></div><div class="t " style="left:754px;top:634px;color:#444;;letter-spacing:-0.124px">Количество</div><div class="t " style="left:851px;top:634px;color:#444;;letter-spacing:-0.199px">Номенклатура</div><div class="t " style="left:1122px;top:634px;color:#444;;letter-spacing:-0.168px">Культура</div><div class="t " style="left:1384px;top:634px;color:#444;;letter-spacing:-0.240px">Характеристика</div><div class="fill" style="left:746px;top:659px;width:872px;height:26px;background:#fff2c6"></div><div class="fill" style="left:843px;top:659px;width:270px;height:26px;background:#ffe38d"></div><div class="vl" style="left:842px;top:659px;height:26px;background:#fff"></div><div class="vl" style="left:1113px;top:659px;height:26px;background:#fff"></div><div class="vl" style="left:1375px;top:659px;height:26px;background:#fff"></div><div class="hl" style="left:746px;top:686px;width:872px"></div><div class="t " style="left:754px;top:665px;color:#343434;width:80px;text-align:right;letter-spacing:-0.127px">50,000</div><div class="t " style="left:851px;top:665px;color:#343434;letter-spacing:-0.035px">Можжевельник # горизонтальный Junip...</div><div class="t " style="left:1122px;top:665px;color:#343434;letter-spacing:-0.046px">Можжевельник горизонтальный Junipe...</div><div class="t " style="left:1384px;top:665px;color:#343434;letter-spacing:-0.085px">Корневая система: CUT</div><div class="hdr" style="left:747px;top:782px;width:871px;height:29px"></div><div class="hl" style="left:746px;top:781px;width:872px;background:#c8c8c8"></div><div class="vl" style="left:842px;top:782px;height:30px;background:#c8c8c8"></div><div class="vl" style="left:843px;top:782px;height:30px;background:#fff"></div><div class="vl" style="left:1113px;top:782px;height:30px;background:#c8c8c8"></div><div class="vl" style="left:1114px;top:782px;height:30px;background:#fff"></div><div class="vl" style="left:1375px;top:782px;height:30px;background:#c8c8c8"></div><div class="vl" style="left:1376px;top:782px;height:30px;background:#fff"></div><div class="t " style="left:754px;top:788px;color:#444;font-weight:bold;width:80px;text-align:right;letter-spacing:-0.230px">50</div>
<svg class="abs" style="left:0;top:0" width="1650" height="836"><path d="M1068.2 404.1 L1214.1 442.3" stroke="#ff0000" stroke-width="1.7" fill="none"/><polygon points="1231.5,446.9 1211.3,437.2 1214.1,442.3 1209.1,445.5" fill="#ff0000"/></svg>
<div class="abs" style="left:1231px;top:411px;width:374px;height:118px;border:1px solid #a8a8a8;background:#fff;box-shadow:0 2px 7px rgba(0,0,0,.2)"></div><div class="t" style="left:1244px;top:420px;font-size:19px;letter-spacing:-.12px;line-height:26px;height:26px;color:#111">Количество</div><svg class="abs" style="left:1519px;top:425px" width="8" height="16" viewBox="0 0 8 16"><g fill="#666"><circle cx="3.6" cy="3.5" r="1.4"/><circle cx="3.6" cy="7.5" r="1.4"/><circle cx="3.6" cy="11.5" r="1.4"/></g></svg><svg class="abs" style="left:1547px;top:426px" width="14" height="14" viewBox="0 0 14 14"><rect x="2.5" y="2.5" width="8.5" height="8.5" fill="none" stroke="#222" stroke-width="1.2"/></svg><svg class="abs" style="left:1577px;top:425px" width="14" height="14" viewBox="0 0 14 14"><path d="M2.3 2.3 L11.7 11.7 M11.7 2.3 L2.3 11.7" fill="none" stroke="#333" stroke-width="1.1"/></svg><div class="abs" style="left:1241px;top:452px;width:347px;height:31px;border:2px solid #fac21a;background:#fff"></div><div class="t " style="left:1440px;top:460px;color:#343434;width:99px;text-align:right;letter-spacing:-0.127px">40,000</div><div class="vl" style="left:1514px;top:459px;height:16px;background:#000"></div><div class="vl" style="left:1542px;top:456px;height:23px;background:#b0b0b0"></div><div class="vl" style="left:1563px;top:456px;height:23px;background:#b0b0b0"></div><svg class="abs" style="left:1547px;top:460px" width="12" height="13" viewBox="0 0 12 13"><rect x="1.5" y="1.5" width="8" height="10" fill="#fff" stroke="#444" stroke-width="1.1"/><rect x="2.6" y="2.6" width="5.8" height="2" fill="#555"/><g fill="#555"><rect x="3" y="6" width="1.2" height="1.2"/><rect x="5" y="6" width="1.2" height="1.2"/><rect x="7" y="6" width="1.2" height="1.2"/><rect x="3" y="8" width="1.2" height="1.2"/><rect x="5" y="8" width="1.2" height="1.2"/><rect x="7" y="8" width="1.2" height="1.2"/><rect x="3" y="9.8" width="1.2" height="1"/><rect x="5" y="9.8" width="1.2" height="1"/><rect x="7" y="9.8" width="1.2" height="1"/></g></svg><div class="hl" style="left:1564px;top:467px;width:21px;background:#b0b0b0"></div><svg class="abs" style="left:1569px;top:458px" width="10" height="18" viewBox="0 0 10 18"><path d="M2.8 5.6 L4.8 3.4 L6.8 5.6 Z M2.8 12.6 L4.8 14.8 L6.8 12.6 Z" fill="#444"/></svg><div class="btn y" style="left:1456px;top:489px;width:47px;height:26px;"><div class="t " style="left:0px;top:5px;color:#3a3a3a;font-weight:bold;width:45px;text-align:center;letter-spacing:-0.250px">OK</div></div><div class="btn " style="left:1512px;top:489px;width:73px;height:26px;"><div class="t " style="left:0px;top:5px;color:#3a3a3a;width:71px;text-align:center;letter-spacing:-0.107px">Отмена</div></div>
<svg class="abs" style="left:0;top:0" width="1650" height="836"><g fill="none" stroke="#111" stroke-width="1.1"><path d="M224 444.6 L808.7 406.4"/><path d="M217.3 722.9 L880.8 716.6 L964.8 687.3"/></g></svg><div class="note" style="left:5.5px;top:430px;font-size:12.5px;letter-spacing:0.261px">3. Выберите другую номенклатуру,</div><div class="note" style="left:5.5px;top:446px;font-size:12.5px;letter-spacing:0.176px">введите количество и нажмите <b style="font-family:'Liberation Serif',serif;font-style:italic;font-size:13px;letter-spacing:0">ОК</b>.</div><div class="note" style="left:4.5px;top:716px;font-size:12.5px;letter-spacing:0.177px">2. Выбранная номенклатура</div><div class="note" style="left:4.5px;top:731.5px;font-size:12.5px;letter-spacing:0.099px">отобразится в корзине формы подбора.</div>
</body></html>
